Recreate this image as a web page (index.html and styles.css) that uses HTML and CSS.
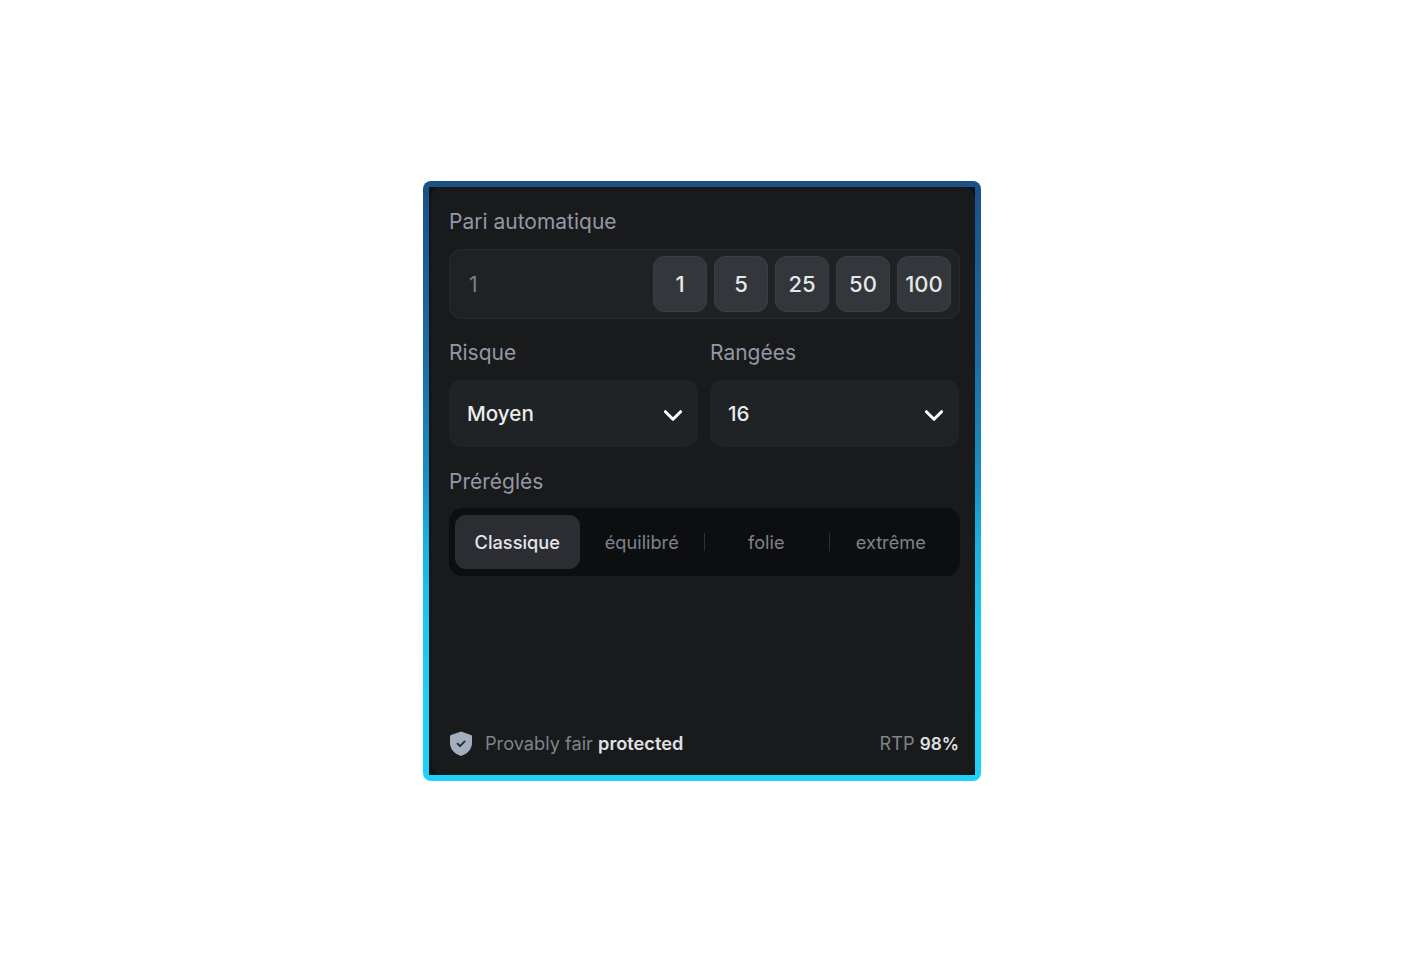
FILE: index.html
```html
<!DOCTYPE html>
<html>
<head>
	<meta charset="utf-8">
	<title>Pari automatique</title>
	<link rel="stylesheet" href="styles.css">
</head>
<body>
	<div class="frame">
		<div class="frame-back">
			<div class="panel">
				<label class="label first">Pari automatique</label>
				<div class="amount-box">
					<span class="amount-val">1</span>
					<button class="chip">1</button>
					<button class="chip">5</button>
					<button class="chip">25</button>
					<button class="chip">50</button>
					<button class="chip">100</button>
				</div>

				<div class="select-row">
					<div class="select-col">
						<label class="label">Risque</label>
						<div class="select-box">
							<span>Moyen</span>
							<svg class="chevron" viewBox="0 0 18 12"><path d="M2 2.500l7 7 7-7" fill="none" stroke="#fff" stroke-width="2.800" stroke-linecap="round" stroke-linejoin="round"/></svg>
						</div>
					</div>
					<div class="select-col">
						<label class="label">Rangées</label>
						<div class="select-box">
							<span>16</span>
							<svg class="chevron" viewBox="0 0 18 12"><path d="M2 2.500l7 7 7-7" fill="none" stroke="#fff" stroke-width="2.800" stroke-linecap="round" stroke-linejoin="round"/></svg>
						</div>
					</div>
				</div>

				<label class="label preset-label">Préréglés</label>
				<div class="tabs">
					<div class="tab active">Classique</div>
					<div class="tab">équilibré</div>
					<div class="tab sep">folie</div>
					<div class="tab sep">extrême</div>
				</div>

				<div class="footer">
					<svg class="shield" viewBox="0 0 24 25">
						<path d="M12 .5l10 3.400c.6.200 1 .8 1 1.400v6.400c0 6.200-4 10.700-10.400 13.100-.4.150-.8.150-1.200 0C5 22.400 1 17.900 1 11.700V5.300c0-.6.4-1.200 1-1.400z" fill="#a3aebf"/>
						<path d="M8.500 12.700l2.500 2.500 4.700-4.800" fill="none" stroke="#23262b" stroke-width="1.800" stroke-linecap="round" stroke-linejoin="round"/>
					</svg>
					<span class="fair">Provably fair <b>protected</b></span>
					<span class="rtp">RTP <b class="rtp-val">98%</b></span>
				</div>
			</div>
		</div>
	</div>
</body>
</html>
```

FILE: styles.css
```css
* {
	margin: 0;
	padding: 0;
	box-sizing: border-box;
}
body {
	display: flex;
	justify-content: center;
	padding-top: 181px;
	background: #fff;
	font-family: Inter, "Liberation Sans", sans-serif;
}

.frame {
	width: 558px;
	height: 600px;
	padding: 6px;
	border-radius: 8px;
	background: linear-gradient(180deg, #1a5085 0%, #1c6ea5 30%, #1a90c5 50%, #1ab0e0 60%, #1cc5f0 72%, #1fd0fa 90%);
}
.frame-back {
	height: 100%;
	background: #0a1018;
}
.panel {
	display: flex;
	flex-direction: column;
	height: 100%;
	padding: 0 15px 0 20px;
	background: #191a1c;
	border-radius: 12px;
	box-shadow: inset 3px 0 3px -2px #0c1014;
}

.label {
	display: block;
	height: 26px;
	line-height: 26px;
	font-size: 21px;
	color: #9298a5;
}
.label.first {
	margin-top: 22px;
}

.amount-box {
	display: flex;
	align-items: center;
	gap: 7px;
	margin-top: 14px;
	height: 70px;
	padding: 0 8px 0 19px;
	background: #1f2224;
	border: 1px solid #27292d;
	border-radius: 12px;
}
.amount-val {
	flex: 1;
	font-size: 21px;
	color: #7b8087;
}
.chip {
	width: 54px;
	height: 56px;
	background: #33363b;
	border: 1px solid #3b3e44;
	border-radius: 11px;
	font-family: inherit;
	font-size: 22px;
	font-weight: 500;
	color: #e6e7e9;
}

.select-row {
	display: flex;
	gap: 12px;
	margin: 21px 1px 0 0;
}
.select-col {
	flex: 1;
}
.select-box {
	display: flex;
	align-items: center;
	justify-content: space-between;
	margin-top: 14px;
	height: 67px;
	padding: 0 15px 0 18px;
	background: #1f2325;
	border-radius: 12px;
	font-size: 20.600px;
	font-weight: 500;
	color: #ececec;
}
.chevron {
	width: 20px;
	height: 13px;
	margin-top: 3px;
}

.preset-label {
	margin-top: 22px;
}
.tabs {
	display: grid;
	grid-template-columns: repeat(4, 1fr);
	margin-top: 13px;
	height: 68px;
	padding: 7px 7px 7px 6px;
	background: #0d0e10;
	border-radius: 14px;
}
.tab {
	display: flex;
	align-items: center;
	justify-content: center;
	position: relative;
	font-size: 18.200px;
	color: #7f838c;
}
.tab.active {
	background: #2b2d33;
	border-radius: 11px;
	font-weight: 500;
	color: #e6e7ea;
}
.tab.sep::before {
	content: "";
	position: absolute;
	left: 0;
	top: 18px;
	height: 18px;
	width: 1px;
	background: #2f3135;
}

.footer {
	display: flex;
	align-items: center;
	margin-top: auto;
	margin-bottom: 19px;
	padding-right: 1px;
	font-size: 18.200px;
	color: #7f838c;
}
.shield {
	width: 24px;
	height: 25px;
	margin: 1px 12px 0 0;
}
.fair {
	flex: 1;
}
.footer b {
	font-weight: 600;
	color: #e0e1e4;
}
.footer .rtp-val {
	font-size: 17.200px;
}
```
